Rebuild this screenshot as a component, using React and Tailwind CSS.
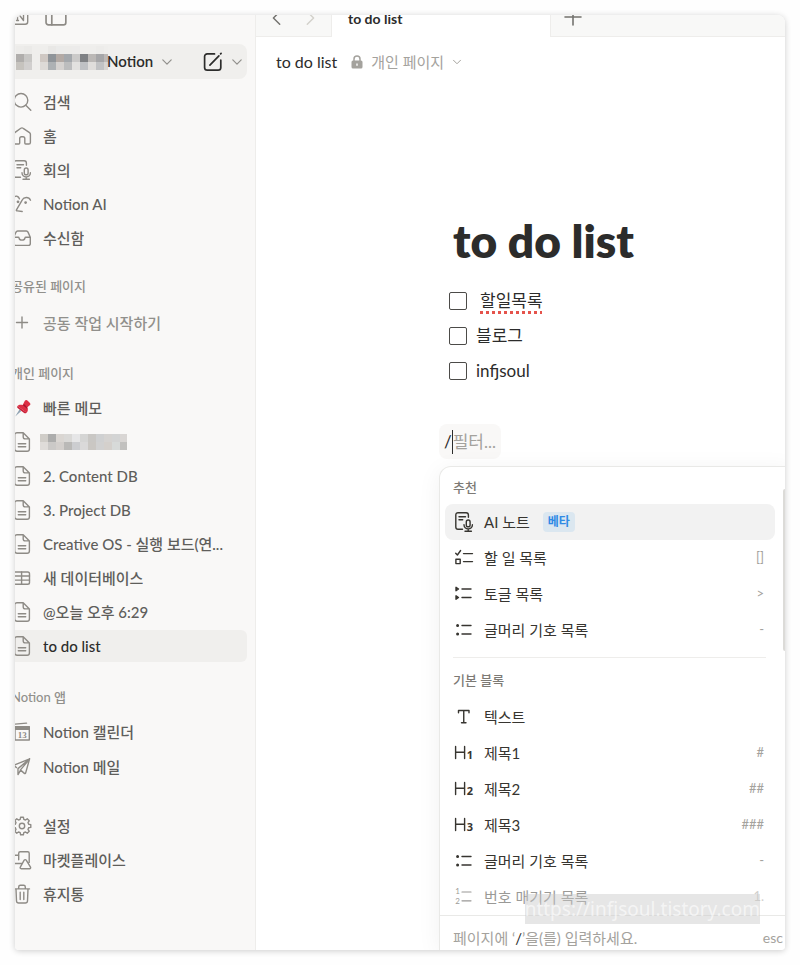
import { useState } from 'react';
import clsx from 'clsx';

function Icon({ children, size = 20, width = 1.4, className }) {
  return (
    <svg
      width={size}
      height={size}
      viewBox="0 0 20 20"
      fill="none"
      stroke="currentColor"
      strokeWidth={width}
      strokeLinecap="round"
      strokeLinejoin="round"
      className={clsx('shrink-0', className)}
      aria-hidden="true"
    >
      {children}
    </svg>
  );
}

const GEAR = Array.from({ length: 8 }, (_, i) => {
  const at = (deg, r) => {
    const a = ((i * 45 + deg) * Math.PI) / 180;
    return `${(10 + r * Math.cos(a)).toFixed(2)} ${(10 + r * Math.sin(a)).toFixed(2)}`;
  };
  return `${at(-15, 6.9)} L${at(-9, 8.9)} L${at(9, 8.9)} L${at(15, 6.9)}`;
}).join(' L');

const SearchIcon = () => (
  <Icon><circle cx="9" cy="8.3" r="6.8" /><path d="m13.8 13.3 5 5" /></Icon>
);
const HomeIcon = () => (
  <Icon><path d="M2 8.2c0-.6.3-1.2.8-1.6l6-4.3a2 2 0 0 1 2.4 0l6.3 4.3c.6.4.9 1 .9 1.6v8.2c0 .9-.7 1.6-1.6 1.6h-3.1c-.5 0-.9-.4-.9-.9v-4.5c0-1-.8-1.8-1.8-1.8H9.500c-1 0-1.800.8-1.800 1.800v4.500c0 .5-.4.9-.9.9H3.600C2.700 18 2 17.300 2 16.400Z" /></Icon>
);
const MeetingIcon = () => (
  <Icon>
    <path d="M8.500 17.300H4a2.200 2.200 0 0 1-2.200-2.200V2.900A2.200 2.200 0 0 1 4 .7h8.200a2.200 2.200 0 0 1 2.200 2.200v2.400M5 4.700h6.500M5 7.700h3.700" />
    <rect x="12.300" y="8" width="3.800" height="6.800" rx="1.900" />
    <path d="M10 12.700a4.200 4.200 0 0 0 8.400 0M14.200 17v2.200M11 19.200h6.400" />
  </Icon>
);
const FaceIcon = () => (
  <Icon>
    <path d="M1.500 3.400C3.600 1.400 6.500 1.800 7.400 4.800M18.500 6.200c-1.600-3.700-6.600-3.500-8.200-.4L4.600 15.700c-.5.9-.1 1.300.8 1.200l4.800.6" />
    <circle cx="6" cy="7.800" r=".7" fill="currentColor" />
    <circle cx="13.600" cy="8.600" r=".7" fill="currentColor" />
  </Icon>
);
const InboxIcon = () => (
  <Icon><path d="M1.700 9.300 4 4.100c.3-.7 1-1.100 1.700-1.100h8.600c.7 0 1.400.4 1.700 1.100l2.300 5.200v6.200c0 1.100-.9 1.900-1.900 1.900H3.600c-1.100 0-1.900-.9-1.900-1.900ZM1.700 9.300h4.500c.5 0 .8.300.9.8.2 1.300 1.500 2 2.900 2s2.700-.7 2.900-2c.1-.5.4-.8.900-.8h4.500" /></Icon>
);
const PlusIcon = () => <Icon><path d="M10 4v11M4.500 9.500h11" /></Icon>;
const PageIcon = () => (
  <Icon>
    <path d="M5 .7h6.200l6.200 6.200v10a2.300 2.300 0 0 1-2.300 2.300H5a2.300 2.300 0 0 1-2.300-2.300V3A2.300 2.300 0 0 1 5 .7ZM11.200.9v3.800c0 1.300.9 2.200 2.200 2.200h3.800M6.300 11.700h7.400M6.300 14.800h7.400" />
  </Icon>
);
const TableIcon = () => (
  <Icon><rect x="1.700" y="4" width="15.800" height="12.200" rx="1.800" /><path d="M1.700 8h15.800M1.700 12.100h15.800M9.600 4v12" /></Icon>
);
const PinIcon = () => (
  <Icon width={0}>
    <path d="m7.600 11.200 1.700 1.700L3.200 18.600z" fill="#8fa2b2" />
    <path d="M12.700 2.900c1-1.300 2-1.200 3-.2l2 2c1 1 1 2-.3 2.900l-2 1.700c.9 2.400.6 4-.7 5.400L5.500 8.100c1.300-1.500 3-1.800 5.200-1Z" fill="#dd2e44" />
    <path d="m10.700 7.100 4.500 4c.1-.7 0-1.200-.2-1.800l-2.500-3Z" fill="#a8142c" />
    <path d="m5.500 8.100 9.200 6.600c-.9.800-2 .8-2.600.2L5.600 9.900c-.6-.5-.5-1.200-.1-1.800Z" fill="#c91f37" />
  </Icon>
);
const CalendarIcon = () => (
  <Icon>
    <path d="m3 2.100 11.500-1" />
    <path d="M3 5.200h14.300V18H3z" />
    <path d="M3 4.600h14.300v2.600H3z" fill="currentColor" />
    <text x="10.200" y="16.200" textAnchor="middle" fontSize="9" fontWeight="700" fill="currentColor" stroke="none" fontFamily="Liberation Serif, serif">13</text>
  </Icon>
);
const MailIcon = () => (
  <Icon><path d="M17.600 1.800 1.800 8.300l2.700 2.300M17.600 1.800l-4 14.300c-.2.600-.8.700-1.200.3l-4.100-3.500M17.600 1.800 6 11.600v6l2.600-4.400M15.500 4.500l-7 8.400" /></Icon>
);
const GearIcon = () => <Icon><path d={`M${GEAR}Z`} /><circle cx="10" cy="10" r="2.700" /></Icon>;
const MarketIcon = () => (
  <Icon>
    <path d="M6.700 9.800V3.200c0-.9.600-1.500 1.500-1.500h7.500c.9 0 1.500.6 1.500 1.500v9.200M12.200 10.200c.5-.8 1.500-.8 2 0l4.300 7c.4.700 0 1.500-.9 1.500H9.200c-.9 0-1.400-.8-.9-1.500Z" />
    <path d="M6.500 5.200H3a4.500 4.500 0 0 0 0 8.300h6.800" />
  </Icon>
);
const TrashIcon = () => (
  <Icon><path d="M2.500 4.900h15M4 5l.5 12c.1 1.200 1 2 2.200 2h6.600c1.200 0 2.100-.8 2.200-2L16 5M6.700 4.700V2.900c0-1.100.7-1.700 1.700-1.700h3.200c1 0 1.700.6 1.700 1.700v1.800M8.200 8.300v7.200M11.800 8.300v7.200" /></Icon>
);
const ComposeIcon = () => (
  <Icon width={1.7}><path d="M11.500 1.900H4.300A2.700 2.700 0 0 0 1.600 4.600v10.800a2.700 2.700 0 0 0 2.700 2.700h10.800a2.700 2.700 0 0 0 2.700-2.700V8.200M6.900 13.100 15.900 3.800M17.600 1.900l.5-.5" /></Icon>
);
const ChevronDown = ({ size = 14 }) => <Icon size={size} width={2}><path d="m3 6.500 7 7 7-7" /></Icon>;

const CheckListIcon = () => (
  <Icon>
    <path d="m1.700 5.200 1.700 1.800 3.200-4.500M9.500 5.600h9M9.500 13.600h9" />
    <rect x="1.900" y="11.300" width="4.300" height="4.300" />
  </Icon>
);
const ToggleListIcon = () => (
  <Icon>
    <path d="M8 5h9M8 13.500h9" />
    <path d="M2 3.300v3.400L4.500 5ZM2 11.800v3.400l2.500-1.700Z" fill="currentColor" />
  </Icon>
);
const BulletIcon = () => (
  <Icon>
    <path d="M8 5.500h9M8 14h9" />
    <circle cx="3.600" cy="5.500" r=".8" fill="currentColor" />
    <circle cx="3.600" cy="14" r=".8" fill="currentColor" />
  </Icon>
);
const TextIcon = () => <Icon><path d="M4.500 5.800V3.500h10.500v2.300M9.750 3.500v12.200M7.500 15.700h4.500" /></Icon>;
const HeadingIcon = ({ level }) => (
  <Icon width={1.4}>
    <path d="M1.600 3.500v12M10.600 3.500v12M1.600 9.300h9" />
    <text x="15.800" y="16.200" textAnchor="middle" fontSize="11" fontWeight="700" fill="currentColor" stroke="none" fontFamily="Noto Sans, sans-serif">{level}</text>
  </Icon>
);
const NumberIcon = () => (
  <Icon width={1.2}>
    <path d="M8 5h9M8 13.800h9" />
    <text x="3.600" y="7.300" textAnchor="middle" fontSize="8" fill="currentColor" stroke="none" fontFamily="Lato, sans-serif">1</text>
    <text x="3.600" y="17" textAnchor="middle" fontSize="8" fill="currentColor" stroke="none" fontFamily="Lato, sans-serif">2</text>
  </Icon>
);

function Mosaic({ rows, width, className }) {
  return (
    <svg width={width} height={rows.length * 8} shapeRendering="crispEdges" className={className} aria-hidden="true">
      {rows.map((row, y) =>
        row.map((fill, x) => <rect key={`${x}-${y}`} x={x * 8} y={y * 8} width="8" height="8" fill={fill} />)
      )}
    </svg>
  );
}

const NAME_MOSAIC = [
  ['#edecea', '#ebeae8', '#efeeec', '#efeeec', '#e9e8e6', '#ebebea', '#ecebe9', '#ecebea', '#efeeec', '#efeeec', '#edecea', '#efeeec'],
  ['#b0aeac', '#c8c7c5', '#efeeec', '#cfc8c3', '#8f9499', '#b3aaa5', '#a4a8ac', '#cbcac9', '#7f8184', '#bbb8b6', '#a6a6a8', '#bdb9b7'],
  ['#c6c3be', '#d1cfce', '#efeeec', '#dddad7', '#adb1b4', '#d5d2d0', '#bcbdbe', '#e2e1df', '#bfc1c4', '#dfdddb', '#c1c2c4', '#d8d5d2'],
];
const PAGE_MOSAIC = [
  ['#d0cdc8', '#adadac', '#dad6d2', '#dad9d7', '#e6e6e7', '#d5d5d4', '#c9c7c4', '#cfd0d1', '#d5d3d1', '#d3d4d4', '#d9d6d4'],
  ['#dfdcd9', '#cbc9c7', '#d3cfcc', '#bab9b7', '#cccdd0', '#dad9d9', '#cac7c3', '#d1d1d1', '#d4d0cc', '#d7dad9', '#c2c1bf'],
];

const NAV = [
  { label: '검색', icon: SearchIcon },
  { label: '홈', icon: HomeIcon },
  { label: '회의', icon: MeetingIcon },
  { label: 'Notion AI', icon: FaceIcon },
  { label: '수신함', icon: InboxIcon },
];

const PAGES = [
  { label: '빠른 메모', icon: PinIcon },
  { label: '', icon: PageIcon, hidden: true },
  { label: '2. Content DB', icon: PageIcon },
  { label: '3. Project DB', icon: PageIcon },
  { label: 'Creative OS - 실행 보드(연...', icon: PageIcon },
  { label: '새 데이터베이스', icon: TableIcon },
  { label: '@오늘 오후 6:29', icon: PageIcon },
  { label: 'to do list', icon: PageIcon, active: true },
];

const SUGGESTED = [
  { label: 'AI 노트', icon: MeetingIcon, badge: '베타', active: true },
  { label: '할 일 목록', icon: CheckListIcon, hint: '[]' },
  { label: '토글 목록', icon: ToggleListIcon, hint: '>' },
  { label: '글머리 기호 목록', icon: BulletIcon, hint: '-' },
];

const BLOCKS = [
  { label: '텍스트', icon: TextIcon },
  { label: '제목1', icon: () => <HeadingIcon level="1" />, hint: '#' },
  { label: '제목2', icon: () => <HeadingIcon level="2" />, hint: '##' },
  { label: '제목3', icon: () => <HeadingIcon level="3" />, hint: '###' },
  { label: '글머리 기호 목록', icon: BulletIcon, hint: '-' },
  { label: '번호 매기기 목록', icon: NumberIcon, hint: '1.', faded: true },
];

function SideItem({ item, muted }) {
  return (
    <a
      href="#"
      className={clsx(
        'flex h-8 items-center gap-[11px] rounded-md pr-3 pl-[5px] text-[15px] font-medium',
        item.active && 'bg-[#f0efed] text-[#2c2c2b]',
        !item.active && (muted ? 'text-[#91908c]' : 'text-[#5f5e5b]')
      )}
    >
      <span className="text-[#8e8b86]"><item.icon /></span>
      {item.hidden ? <Mosaic rows={PAGE_MOSAIC} width={87} className="-ml-[3px]" /> : <span className="truncate">{item.label}</span>}
    </a>
  );
}

function SideLabel({ children }) {
  return <div className="flex h-7 items-center pl-1 text-[13px] font-medium text-[#91908c]">{children}</div>;
}

function Sidebar() {
  return (
    <aside className="w-[241px] shrink-0 border-r border-[#eeedeb] bg-[#f9f8f7] pr-2">
      <div className="-mt-2 -ml-2 flex flex-col">
        <div className="flex h-5 items-center gap-3 pl-[5px] text-[#8e8b86]">
          <Icon><rect x=".7" y="1.200" width="15" height="16" rx="2.500" /><path d="M5.500 13.500v-8l6 8v-8M4.500 5.500h1.500M4.500 13.500h2M10.500 5.500h2" /></Icon>
          <Icon size={24}><rect x="1.700" y="2" width="16.500" height="14.500" rx="2" /><path d="M6.500 2v14.500" /></Icon>
        </div>
        <div className="mt-[17px] flex h-[35px] items-center rounded-lg bg-[#f0efed] pr-1 pl-[9px]">
          <Mosaic rows={NAME_MOSAIC} width={92} className="-mt-2 shrink-0" />
          <button className="-ml-px flex items-center gap-2 text-[15px] font-semibold whitespace-nowrap text-[#2c2c2b]">
            Notion
            <span className="text-[#91908c]"><ChevronDown size={12} /></span>
          </button>
          <button className="ml-auto text-[#2c2c2b]" aria-label="새 페이지"><ComposeIcon /></button>
          <button className="ml-2 text-[#91908c]" aria-label="더 보기"><ChevronDown size={12} /></button>
        </div>

        <nav className="mt-[7px] flex flex-col gap-[2px]">
          {NAV.map(item => <SideItem key={item.label} item={item} />)}
        </nav>

        <div className="mt-[19px]">
          <SideLabel>공유된 페이지</SideLabel>
          <div className="mt-[6px]"><SideItem item={{ label: '공동 작업 시작하기', icon: PlusIcon }} muted /></div>
        </div>

        <div className="mt-[21px]">
          <SideLabel>개인 페이지</SideLabel>
          <div className="mt-1 flex flex-col gap-[2px]">
            {PAGES.map((item, i) => <SideItem key={i} item={item} />)}
          </div>
        </div>

        <div className="mt-[22px]">
          <SideLabel>Notion 앱</SideLabel>
          <div className="mt-1 flex flex-col gap-[3px]">
            <SideItem item={{ label: 'Notion 캘린더', icon: CalendarIcon }} />
            <SideItem item={{ label: 'Notion 메일', icon: MailIcon }} />
          </div>
        </div>

        <div className="mt-[27px] flex flex-col gap-[2px]">
          <SideItem item={{ label: '설정', icon: GearIcon }} />
          <SideItem item={{ label: '마켓플레이스', icon: MarketIcon }} />
          <SideItem item={{ label: '휴지통', icon: TrashIcon }} />
        </div>
      </div>
    </aside>
  );
}

function TabBar() {
  return (
    <div className="-mt-4 flex h-[38px] text-[#73726e]">
      <div className="flex w-[76px] shrink-0 items-center justify-between border-r border-b border-[#eeedeb] bg-[#f8f8f7] px-3">
        <button aria-label="뒤로"><Icon size={18} width={1.6}><path d="m13 3-7 7 7 7" /></Icon></button>
        <button aria-label="앞으로" className="text-[#d3d1cb]"><Icon size={18} width={1.6}><path d="m7 3 7 7-7 7" /></Icon></button>
      </div>
      <div className="flex w-[218px] shrink-0 items-center px-4 text-[14px] font-bold text-[#2c2c2b]">to do list</div>
      <div className="flex flex-1 items-center border-b border-l border-[#eeedeb] bg-[#f8f8f7] px-3">
        <button aria-label="새 탭"><Icon width={1.6}><path d="M10 1v16M2 9h16" /></Icon></button>
      </div>
    </div>
  );
}

function MenuItem({ item }) {
  return (
    <button
      className={clsx(
        'flex h-9 w-full items-center rounded-lg pr-[11px] pl-[9px] text-left text-[15px] text-[#373530]',
        item.active && 'bg-[#f2f2f2]',
        item.faded && 'opacity-50'
      )}
    >
      <item.icon />
      <span className="ml-[10px]">{item.label}</span>
      {item.badge && (
        <span className="ml-[13px] rounded bg-[#dbe7f0] px-[5px] text-[12px] leading-5 font-semibold text-[#2f8ae5]">{item.badge}</span>
      )}
      {item.hint && <span className="ml-auto text-[13px] text-[#a4a29d]">{item.hint}</span>}
    </button>
  );
}

function SlashMenu() {
  return (
    <div className="relative mt-[7px] -mr-2 ml-[183px] rounded-tl-xl border border-b-0 border-[#e9e9e7] bg-white shadow-[0_4px_24px_rgba(0,0,0,0.06)]">
      <div className="pr-[17px] pl-[5px]">
        <div className="flex h-[37px] items-center pt-1 pl-2 text-[13px] font-medium text-[#7d7a75]">추천</div>
        {SUGGESTED.map(item => <MenuItem key={item.label} item={item} />)}
        <hr className="mt-[9px] mr-[9px] ml-2 border-[#eeedeb]" />
        <div className="mt-[9px] flex h-7 items-center pl-2 text-[13px] font-medium text-[#7d7a75]">기본 블록</div>
        <div className="mt-1 flex flex-col">
          {BLOCKS.map(item => <MenuItem key={item.label} item={item} />)}
        </div>
      </div>
      <div className="flex h-[35px] items-end justify-between border-t border-[#e9e9e7] pr-[9px] pl-[13px] text-[15px] leading-6 text-[#a4a29d]">
        <span>페이지에 ‘<span className="text-[#2c2c2b]">/</span>’을(를) 입력하세요.</span>
        <span className="text-[14px]">esc</span>
      </div>
      <div className="absolute top-[22px] right-[5px] h-[162px] w-1 rounded-full bg-[#dcdbd8]" />
    </div>
  );
}

export default function App() {
  const [todos, setTodos] = useState([
    { text: '할일목록', done: false, misspelled: true },
    { text: '블로그', done: false },
    { text: 'infjsoul', done: false },
  ]);

  const toggle = index => setTodos(todos.map((t, i) => (i === index ? { ...t, done: !t.done } : t)));

  return (
    <div className="bg-[#fefefe] p-[15px] font-[Lato,'Noto_Sans_CJK_KR',sans-serif]">
      <div className="relative flex overflow-hidden rounded-t-lg rounded-b-sm bg-white shadow-[0_1px_6px_rgba(0,0,0,0.2)]">
        <Sidebar />
        <main className="min-w-0 flex-1">
          <TabBar />
          <div className="flex h-[50px] items-center px-5 text-[15px] text-[#a4a29d]">
            <span className="text-[16px] text-[#2c2c2b]">to do list</span>
            <svg width="12" height="14" viewBox="0 0 12 14" className="ml-[14px]" aria-hidden="true">
              <path d="M3 6V4a3 3 0 0 1 6 0v2" fill="none" stroke="currentColor" strokeWidth="1.500" />
              <rect x=".5" y="5.500" width="11" height="8" rx="1.500" fill="currentColor" />
              <path d="M6 8.500v2.200" stroke="#fff" strokeWidth="1.400" />
            </svg>
            <button className="ml-2 flex items-center gap-2">
              개인 페이지
              <ChevronDown size={10} />
            </button>
          </div>

          <h1 className="mt-[126px] ml-[197px] text-[46px] leading-[56px] font-extrabold text-[#2c2c2b]">to do list</h1>
          <ul className="mt-[14px] ml-[193px]">
            {todos.map((todo, i) => (
              <li key={todo.text} className="h-[35px]">
                <label className="flex h-full items-center gap-[9px] text-[17px] text-[#2c2c2b]">
                  <input
                    type="checkbox"
                    checked={todo.done}
                    onChange={() => toggle(i)}
                    className="size-[18px] shrink-0 appearance-none rounded-[2px] border border-[#4c4b48] checked:bg-[#2383e2]"
                  />
                  <span className={clsx('pt-px', todo.misspelled && 'ml-1 underline decoration-[#e5534b] decoration-dotted decoration-3 underline-offset-4')}>{todo.text}</span>
                </label>
              </li>
            ))}
          </ul>
          <div className="mt-9 ml-[183px] flex h-[35px] w-fit items-center rounded-lg bg-[#f9f8f7] px-[5px] text-[17px] text-[#a4a29d]">
            <span className="text-[#2c2c2b]">/</span>
            <span className="h-6 w-px bg-[#2c2c2b]" />
            필터...
          </div>
          <SlashMenu />
        </main>
        <div className="absolute right-[25px] bottom-[26px] bg-[#c8c8c8]/45 font-['Noto_Sans',sans-serif] text-[19px] leading-[30px] text-white/60">
          https://infjsoul.tistory.com
        </div>
      </div>
    </div>
  );
}
